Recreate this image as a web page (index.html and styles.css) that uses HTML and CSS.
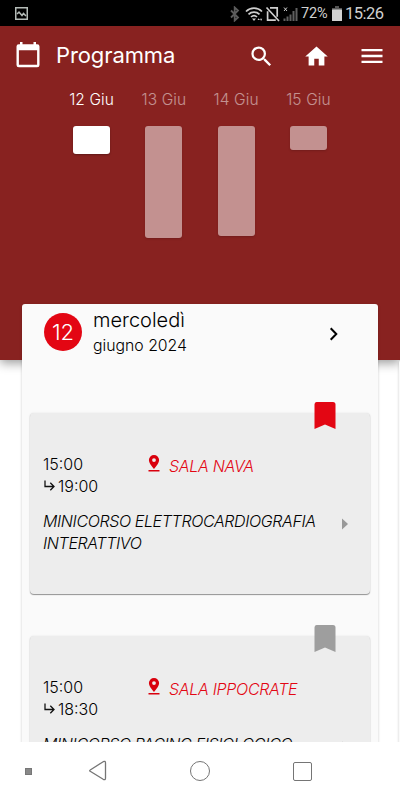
FILE: index.html
```html
<!DOCTYPE html>
<html lang="it">
  <head>
    <meta charset="UTF-8" />
    <meta name="viewport" content="width=device-width, initial-scale=1.0" />
    <title>Programma</title>
    <link rel="stylesheet" href="styles.css">
  </head>
  <body>
    <div class="status-bar">
      <svg class="status-picture" width="13" height="13" viewBox="0 0 13 13" fill="none" stroke="#b5bcb8" stroke-width="1.5">
        <rect x="0.75" y="0.75" width="11.5" height="11.5" />
        <path d="M2 7l2-2 3 3.5 1.5-2L11 9" />
      </svg>
      <svg class="status-icons" width="68" height="16" viewBox="0 0 68 16" fill="none">
        <!-- bluetooth -->
        <path d="M1 4.500l7 7L4.700 14.500V1.500L8 4.500l-7 7" stroke="#5c5c5c" stroke-width="1.800" />
        <!-- wifi -->
        <path d="M16 5.500c4.500-4.500 11.500-4.500 16 0M18.500 8.300c3-3 8-3 11 0M21 11c1.800-1.700 4.300-1.700 6 0" stroke="#cfcfcf" stroke-width="1.700" />
        <path d="M22 12.500h4l-2 2.500zM27.500 14l1.200-1.800 1.200 1.800zM30 12.800h2.200L31.100 15z" fill="#cfcfcf" />
        <!-- no sim -->
        <path d="M40 1.800h7.200v9M45.800 14.200h-8.200V5.200M36.500 1.500l12.500 13.500" stroke="#cfcfcf" stroke-width="1.700" />
        <!-- signal -->
        <path d="M54 1.500l3 3.500M57 1.500l-3 3.500" stroke="#cfcfcf" stroke-width="1" />
        <path d="M54.500 15v-2.500M57.500 15v-4.500M60.500 15V8.500M63.500 15V5M66.500 15V2" stroke="#606060" stroke-width="2" />
      </svg>
      <span class="battery-level">72%</span>
      <svg class="battery" width="10" height="15" viewBox="0 0 10 15">
        <path d="M3 0h4v2h3v2.500H0V2h3z" fill="#555" />
        <rect y="3.500" width="10" height="11.500" rx="0.500" fill="#d2d2d2" />
      </svg>
      <span class="clock">15:26</span>
    </div>

    <main class="app">
      <header class="header">
        <div class="toolbar">
          <svg class="calendar" width="24" height="26" viewBox="0 0 24 26">
            <path fill="#fff" fill-rule="evenodd" d="M4 0h2.500v2.200h11V0H20v2.200h1.200a2.300 2.300 0 0 1 2.300 2.300v18.400a2.300 2.300 0 0 1-2.300 2.300H2.800a2.300 2.300 0 0 1-2.300-2.300V4.500a2.300 2.300 0 0 1 2.300-2.300H4zM2.900 8.200v14.500h18.200V8.200z" />
          </svg>
          <h1>Programma</h1>
          <svg class="search" width="27" height="27" viewBox="0 0 24 24" fill="#fff">
            <path d="M15.500 14h-.79l-.28-.27A6.471 6.471 0 0 0 16 9.500 6.500 6.500 0 1 0 9.500 16c1.610 0 3.090-.59 4.230-1.570l.27.28v.79l5 4.990L20.490 19l-4.990-5zm-6 0C7.010 14 5 11.990 5 9.500S7.010 5 9.500 5 14 7.010 14 9.500 11.990 14 9.500 14z" />
          </svg>
          <svg class="home" width="27" height="27" viewBox="0 0 24 24" fill="#fff">
            <path d="M10 20v-6h4v6h5v-8h3L12 3 2 12h3v8z" />
          </svg>
          <svg class="menu" width="28" height="28" viewBox="0 0 24 24" fill="#fff">
            <path d="M3 18h18v-2H3v2zm0-5h18v-2H3v2zm0-7v2h18V6H3z" />
          </svg>
        </div>
        <div class="days">
          <div class="day active"><span>12 Giu</span><div class="bar" style="height: 28px"></div></div>
          <div class="day"><span>13 Giu</span><div class="bar" style="height: 112px"></div></div>
          <div class="day"><span>14 Giu</span><div class="bar" style="height: 110px"></div></div>
          <div class="day"><span>15 Giu</span><div class="bar" style="height: 24px"></div></div>
        </div>
      </header>

      <div class="slides">
        <section class="sheet">
          <div class="sheet-header">
            <div class="day-number">12</div>
            <div class="date">
              <h2>mercoledì</h2>
              <p>giugno 2024</p>
            </div>
            <svg class="next" width="10" height="14" viewBox="0 0 10 14" fill="none" stroke="#000" stroke-width="2">
              <path d="M1.700 1.200L7.300 7l-5.600 5.800" />
            </svg>
          </div>

          <article class="event">
            <svg class="bookmark saved" width="22" height="27" viewBox="0 0 22 27">
              <path d="M2.500 0h16.500a2.500 2.500 0 0 1 2.500 2.500V27L11 22.500.5 27V2.500A2.500 2.500 0 0 1 2.500 0z" />
            </svg>
            <div class="event-info">
              <div class="time">
                <div>15:00</div>
                <div class="time-end">
                  <svg width="12" height="12" viewBox="0 0 12 12" fill="none" stroke="#111" stroke-width="1.300">
                    <path d="M2 0.500v6h8.300M7.300 2.800L11 6.500l-3.700 3.700" />
                  </svg>
                  <span>19:00</span>
                </div>
              </div>
              <div class="room">
                <svg width="12" height="17" viewBox="0 0 12 17">
                  <path fill="#d9000d" fill-rule="evenodd" d="M6 0a5.100 5.100 0 0 1 5.100 5.100C11.100 8.800 6 14 6 14S.9 8.800.9 5.100A5.100 5.100 0 0 1 6 0zm0 3.200a1.900 1.900 0 1 0 0 3.800 1.900 1.900 0 0 0 0-3.800zM.5 15h11v1.500H.5z" />
                </svg>
                <span>SALA NAVA</span>
              </div>
            </div>
            <div class="event-title">
              <h3>MINICORSO ELETTROCARDIOGRAFIA INTERATTIVO</h3>
              <svg width="6" height="12" viewBox="0 0 6 12"><path d="M0 0.500L6 6 0 11.500z" fill="#999" /></svg>
            </div>
          </article>

          <article class="event">
            <svg class="bookmark" width="22" height="27" viewBox="0 0 22 27">
              <path d="M2.500 0h16.500a2.500 2.500 0 0 1 2.500 2.500V27L11 22.500.5 27V2.500A2.500 2.500 0 0 1 2.500 0z" />
            </svg>
            <div class="event-info">
              <div class="time">
                <div>15:00</div>
                <div class="time-end">
                  <svg width="12" height="12" viewBox="0 0 12 12" fill="none" stroke="#111" stroke-width="1.300">
                    <path d="M2 0.500v6h8.300M7.300 2.800L11 6.500l-3.700 3.700" />
                  </svg>
                  <span>18:30</span>
                </div>
              </div>
              <div class="room">
                <svg width="12" height="17" viewBox="0 0 12 17">
                  <path fill="#d9000d" fill-rule="evenodd" d="M6 0a5.100 5.100 0 0 1 5.100 5.100C11.100 8.800 6 14 6 14S.9 8.800.9 5.100A5.100 5.100 0 0 1 6 0zm0 3.200a1.900 1.900 0 1 0 0 3.800 1.900 1.900 0 0 0 0-3.800zM.5 15h11v1.500H.5z" />
                </svg>
                <span>SALA IPPOCRATE</span>
              </div>
            </div>
            <div class="event-title">
              <h3>MINICORSO PACING FISIOLOGICO</h3>
              <svg width="6" height="12" viewBox="0 0 6 12"><path d="M0 0.500L6 6 0 11.500z" fill="#999" /></svg>
            </div>
          </article>
        </section>
        <section class="sheet"></section>
      </div>
    </main>

    <nav class="nav-bar">
      <span class="nav-dot"></span>
      <svg class="nav-back" width="20" height="22" viewBox="0 0 20 22" fill="none" stroke="#757575" stroke-width="1.300">
        <path d="M2.200 10L15.200 1.700q2.300-1.200 2.300 1v15.600q0 2.200-2.300 1L2.200 11.300q-1-.7 0-1.300z" />
      </svg>
      <span class="nav-home"></span>
      <span class="nav-recent"></span>
    </nav>
  </body>
</html>
```
FILE: styles.css
```css
* {
  margin: 0;
  padding: 0;
  box-sizing: border-box;
}

body {
  width: 400px;
  height: 800px;
  overflow: hidden;
  display: flex;
  flex-direction: column;
  font-family: Inter, sans-serif;
  font-weight: 300;
  color: #000;
  background: #fff;
}

svg {
  display: block;
  flex-shrink: 0;
}

/* Android status bar */
.status-bar {
  height: 26px;
  flex-shrink: 0;
  display: flex;
  align-items: center;
  padding: 1px 0 0 15px;
  background: #000;
  color: #d0d0d0;
  font-family: Roboto, sans-serif;
  font-weight: 400;
}

.status-icons {
  margin-left: 202px;
}

.battery-level {
  width: 31px;
  margin-left: 3px;
  font-size: 14.5px;
  letter-spacing: -0.1px;
}

.clock {
  margin-left: 3px;
  font-size: 16.5px;
  letter-spacing: -0.5px;
}

.app {
  height: 716px;
  flex-shrink: 0;
  overflow: hidden;
}

.header {
  height: 334px;
  background: #882220;
  box-shadow: 0 3px 10px rgba(0, 0, 0, 0.4);
  color: #fff;
}

.toolbar {
  height: 60px;
  display: flex;
  align-items: center;
  padding-left: 16px;
}

.calendar {
  margin-bottom: 2px;
}

.toolbar h1 {
  width: 190px;
  margin: -3px 0 0 16px;
  font-size: 22px;
  font-weight: 400;
  letter-spacing: -0.1px;
}

.search {
  margin-left: 2px;
}

.home {
  margin-left: 28px;
}

.menu {
  margin-left: 28px;
}

.days {
  display: grid;
  grid-template-columns: repeat(4, 72.3px);
  justify-content: center;
}

.day {
  display: flex;
  flex-direction: column;
  align-items: center;
  opacity: 0.5;
}

.day.active {
  opacity: 1;
}

.day span {
  height: 40px;
  padding-top: 4px;
  font-size: 15.5px;
  line-height: 20px;
  font-weight: 350;
  letter-spacing: 0.1px;
}

.bar {
  width: 37px;
  background: #fff;
  border-radius: 3px;
  box-shadow: 0 1px 2px rgba(0, 0, 0, 0.3);
}

.slides {
  position: relative;
  display: flex;
  gap: 21px;
  margin-top: -56px;
  padding-left: 22px;
}

.sheet {
  width: 356px;
  height: 600px;
  flex-shrink: 0;
  padding: 0 8px;
  background: #fafafa;
  border-radius: 3px;
  box-shadow: 0 1px 3px rgba(0, 0, 0, 0.2);
}

.sheet + .sheet {
  margin-top: 56px;
}

.sheet-header {
  height: 109px;
  display: flex;
  align-items: flex-start;
  padding-left: 14px;
}

.day-number {
  width: 38px;
  height: 38px;
  margin-top: 9px;
  border-radius: 50%;
  background: #e30613;
  color: #fff;
  font-size: 22px;
  line-height: 38px;
  font-weight: 350;
  text-align: center;
}

.date {
  width: 236px;
  margin-left: 11px;
  padding-top: 3px;
}

.date h2 {
  font-size: 20px;
  line-height: 26px;
  font-weight: 300;
}

.date p {
  font-size: 15.8px;
  line-height: 26px;
}

.next {
  margin-top: 23px;
}

.event {
  position: relative;
  height: 181px;
  margin-bottom: 42px;
  padding: 41px 13px 0;
  background: #ededed;
  border-radius: 4px;
  box-shadow: 0 1px 1px rgba(0, 0, 0, 0.4), 0 0 2px rgba(0, 0, 0, 0.1);
}

/* Overlaps the top edge of the card */
.bookmark {
  position: absolute;
  top: -11px;
  right: 34px;
  fill: #9e9e9e;
}

.bookmark.saved {
  fill: #e30613;
}

.event-info {
  display: flex;
  font-size: 16px;
  line-height: 21.5px;
}

.time {
  width: 105px;
}

.time-end {
  display: flex;
  align-items: center;
  gap: 3px;
}

.room {
  display: flex;
  align-items: flex-start;
  gap: 9px;
  color: #e30613;
  font-style: italic;
  letter-spacing: -0.3px;
}

.room svg {
  margin-top: 1px;
}

.room span {
  padding-top: 2px;
}

.event-title {
  display: flex;
  align-items: flex-start;
  margin-top: 14px;
}

.event-title h3 {
  width: 299px;
  font-size: 16px;
  line-height: 21.5px;
  font-weight: 300;
  font-style: italic;
  letter-spacing: -0.38px;
}

.event-title svg {
  margin-top: 7px;
}

/* Android navigation buttons */
.nav-bar {
  height: 58px;
  display: flex;
  align-items: center;
  padding-left: 25px;
  background: #fff;
}

.nav-dot {
  width: 7px;
  height: 7px;
  background: #888;
  border: 1px solid #777;
}

.nav-back {
  margin-left: 56px;
}

.nav-home {
  width: 20px;
  height: 20px;
  margin-left: 82px;
  border: 1.5px solid #757575;
  border-radius: 50%;
}

.nav-recent {
  width: 19px;
  height: 19px;
  margin-left: 83px;
  border: 1.5px solid #757575;
  border-radius: 2px;
}
```
